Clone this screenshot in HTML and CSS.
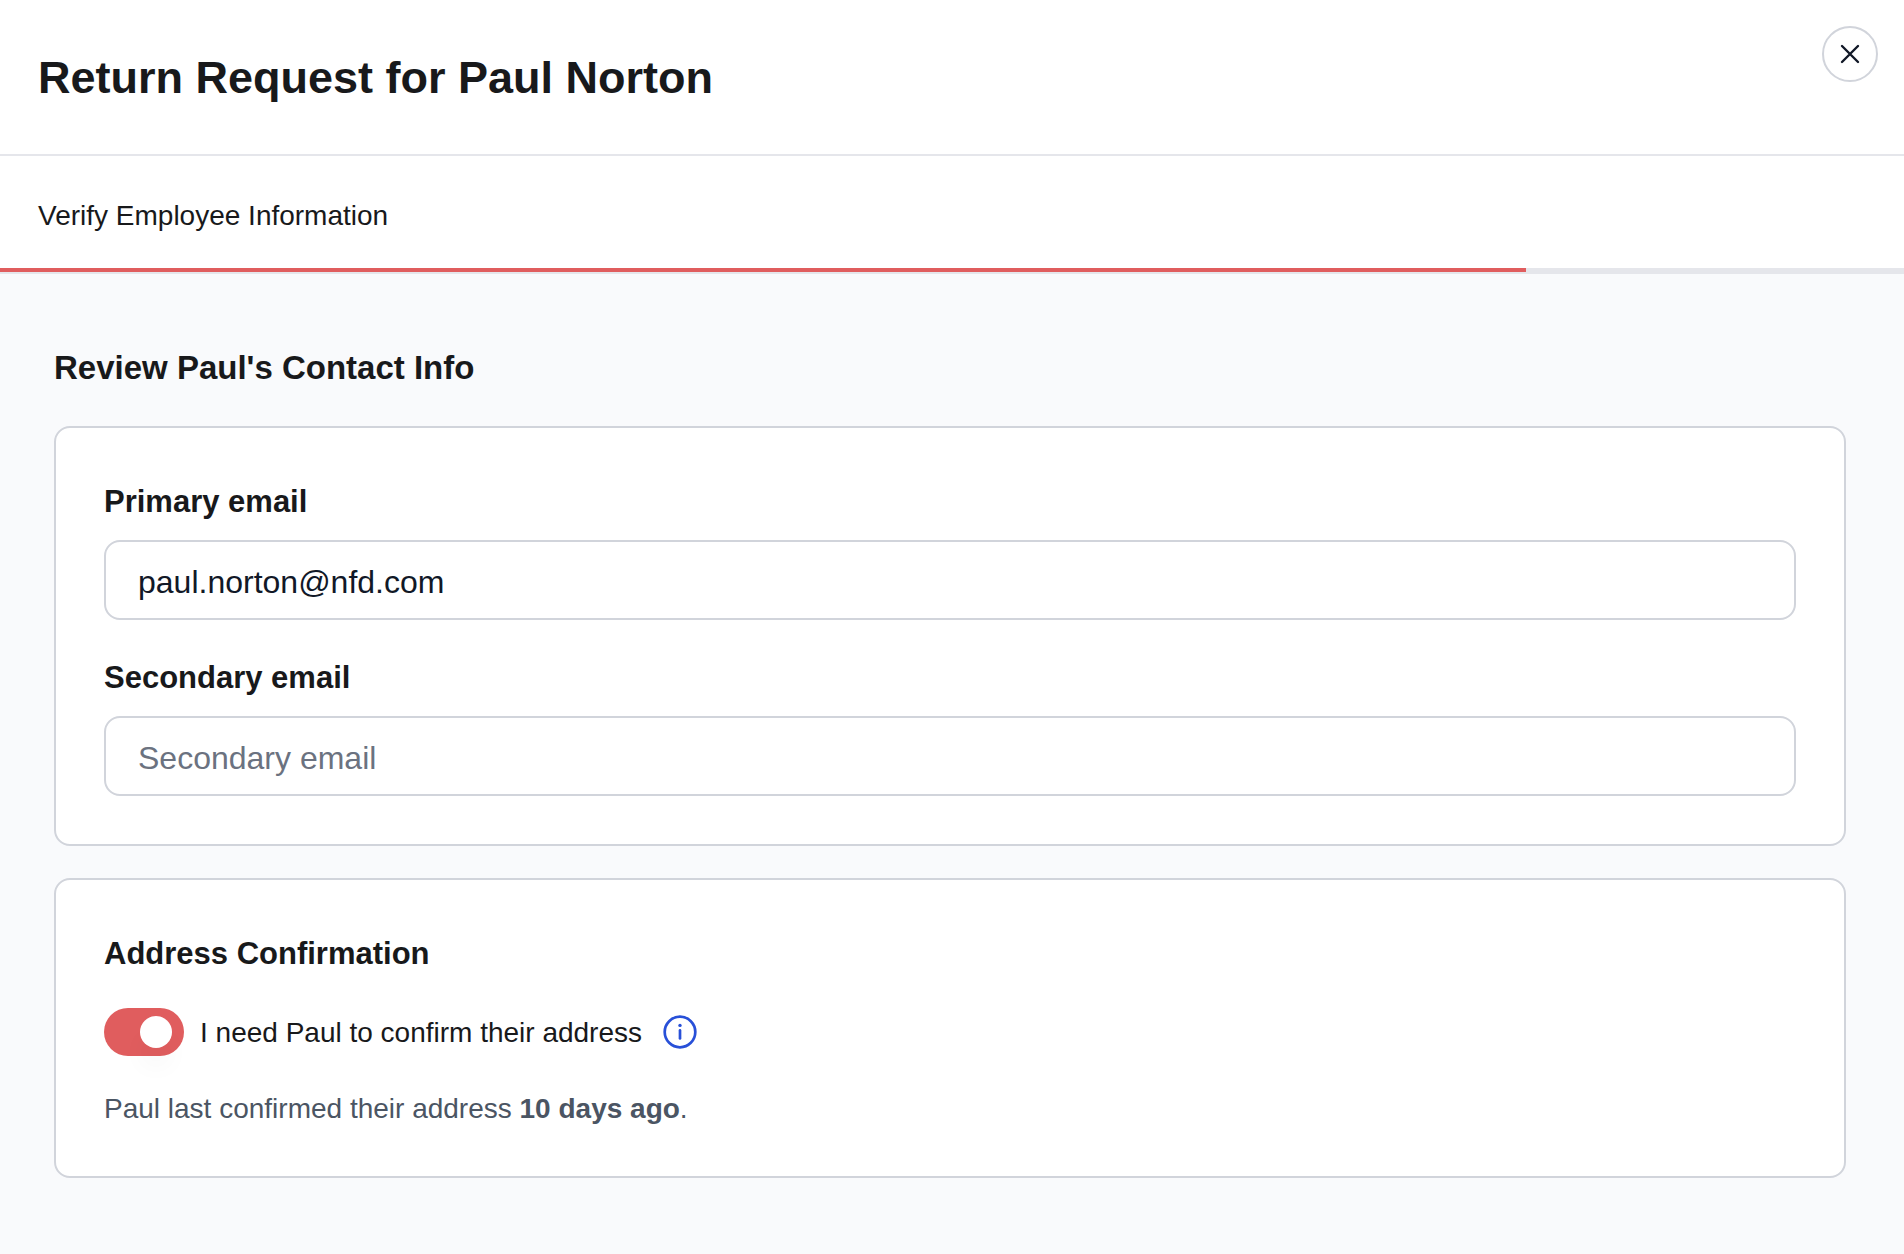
FILE: index.html
```html
<!DOCTYPE html>
<html lang="en">
<head>
    <meta charset="UTF-8">
    <meta name="viewport" content="width=device-width, initial-scale=1.0">
    <title>Return Request</title>
    <link rel="stylesheet" href="styles.css">
</head>
<body>
    <div class="wrap">
        <header class="header">
            <h1>Return Request for Paul Norton</h1>
            <button type="button" class="btn_close" aria-label="Close">
                <svg width="24" height="24" viewBox="0 0 24 24"><path d="M4 4 20 20M20 4 4 20"/></svg>
            </button>
        </header>
        <div class="step">
            <p>Verify Employee Information</p>
            <div class="progress"><div class="bar" style="width:80.15%"></div></div>
        </div>
        <main class="content">
            <h2>Review Paul's Contact Info</h2>
            <section class="card">
                <div class="field">
                    <label for="primary_email">Primary email</label>
                    <input type="email" id="primary_email" value="paul.norton@nfd.com">
                </div>
                <div class="field">
                    <label for="secondary_email">Secondary email</label>
                    <input type="email" id="secondary_email" placeholder="Secondary email">
                </div>
            </section>
            <section class="card">
                <h3>Address Confirmation</h3>
                <div class="toggle_row">
                    <input type="checkbox" id="confirm_address" class="toggle" checked>
                    <label for="confirm_address">I need Paul to confirm their address</label>
                    <button type="button" class="btn_info" aria-label="More info">
                        <svg width="40" height="40" viewBox="0 0 40 40">
                            <circle class="ring" cx="20" cy="20" r="15.3"/>
                            <circle class="dot" cx="20" cy="13.4" r="1.7"/>
                            <path class="ring" d="M20 18.4v8"/>
                        </svg>
                    </button>
                </div>
                <p class="note">Paul last confirmed their address <strong>10 days ago</strong>.</p>
            </section>
        </main>
    </div>
</body>
</html>
```
FILE: styles.css
```css
*{margin:0;padding:0;box-sizing:border-box;}
body{background-color:#f9fafc;color:#18191b;font-family:"Liberation Sans",Arial,sans-serif;}
button{background:transparent;border:0;cursor:pointer;}
svg{display:block;}

.header{display:flex;justify-content:space-between;align-items:flex-start;padding:26px 26px 46px 38px;background-color:#fff;border-bottom:2px solid #e5e6eb;}
.header h1{margin-top:22px;font-size:45px;line-height:60px;font-weight:700;}
.btn_close{display:flex;flex-shrink:0;align-items:center;justify-content:center;width:56px;height:56px;border:2px solid #d1d4db;border-radius:50%;}
.btn_close svg{fill:none;stroke:#111827;stroke-width:2.4;stroke-linecap:round;}

.step{background-color:#fff;border-bottom:2px solid #e5e6eb;}
.step p{padding:40px 38px 32px;font-size:28px;line-height:40px;}
.progress{height:4px;background-color:#e5e6eb;}
.progress .bar{height:100%;background-color:#e05d5e;}

.content{padding:70px 58px 76px 54px;}
.content h2{margin-bottom:34px;font-size:33px;line-height:48px;font-weight:700;}
.card{padding:52px 48px 48px;border:2px solid #d1d4db;border-radius:16px;background-color:#fff;}
.card + .card{margin-top:32px;}
.card h3,
.field label{display:block;font-size:31px;line-height:44px;font-weight:700;}
.field + .field{margin-top:36px;}
.field input{display:block;width:100%;height:80px;margin-top:16px;padding:4px 32px 0;border:2px solid #d1d4db;border-radius:16px;background-color:#fff;color:#111827;font-family:inherit;font-size:32px;}
.field input::placeholder{color:#6b7280;opacity:1;}

.toggle_row{display:flex;align-items:center;height:48px;margin-top:32px;font-size:28px;}
.toggle_row label{padding-top:2px;}
.toggle{appearance:none;flex-shrink:0;width:80px;height:48px;margin-right:16px;padding:8px 12px;border-radius:24px;background-color:#e05d5e;cursor:pointer;}
.toggle:before{content:'';display:block;width:32px;height:32px;border-radius:50%;background-color:#fff;}
.toggle:checked:before{margin-left:auto;box-shadow:0 20px 24px rgba(0,0,0,0.03);}
.btn_info{margin-left:18px;}
.btn_info .ring{fill:none;stroke:#2850d8;stroke-width:2.7;stroke-linecap:round;}
.btn_info .dot{fill:#2850d8;}
.note{margin-top:34px;color:#4b5563;font-size:28px;line-height:38px;}
```
